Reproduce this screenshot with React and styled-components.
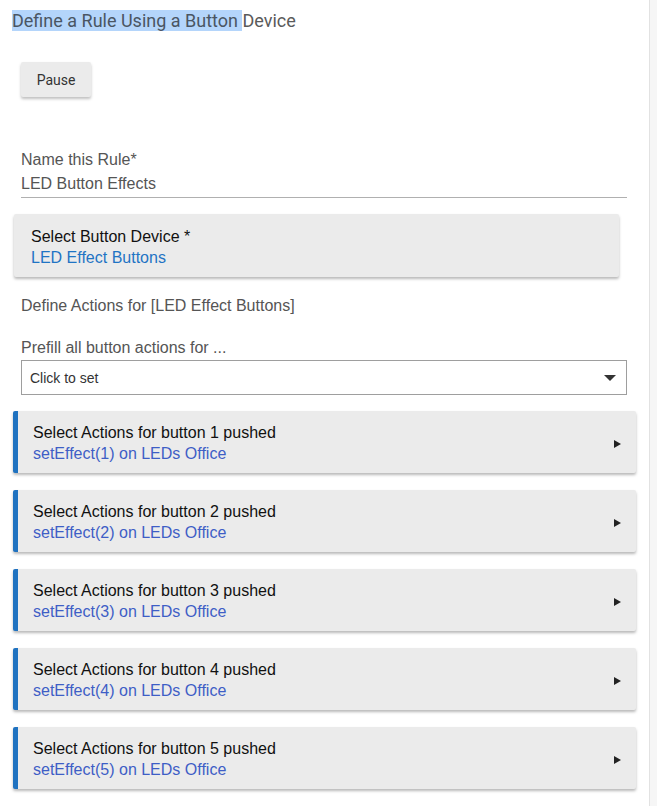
import styled, { createGlobalStyle } from "styled-components";

const GlobalStyle = createGlobalStyle`
  body {
    margin: 0;
    background: #f6f6f6;
    font-family: "Liberation Sans", Arial, sans-serif;
  }
`;

const Page = styled.div`
  width: 650px;
  min-height: 806px;
  background: #fff;
  border-right: 1px solid #e2e2e2;
  box-sizing: border-box;
  padding-top: 10px;
`;

const Title = styled.h2`
  margin: 0 0 0 12px;
  font-family: Roboto, sans-serif;
  font-weight: 400;
  font-size: 18px;
  line-height: 21px;
  color: #5a5a5a;
`;

const Selected = styled.span`
  background: #b4d5fb;
  color: #4a5563;
`;

const PauseButton = styled.button`
  display: block;
  margin: 31px 0 0 21px;
  width: 70px;
  height: 35px;
  border: none;
  border-radius: 2px;
  background: #ebebeb;
  box-shadow: 0 2px 3px rgba(0, 0, 0, 0.25);
  font-family: Roboto, sans-serif;
  font-size: 14px;
  color: #333;
`;

const Field = styled.div`
  margin: 52px 22px 0 21px;
  border-bottom: 1px solid #b0b0b0;
`;

const Label = styled.div`
  font-size: 16px;
  line-height: 22px;
  color: #555;
  margin-top: ${(p) => p.$top || 0}px;
  padding-left: ${(p) => p.$left || 0}px;
`;

const Value = styled.div`
  font-size: 16px;
  line-height: 26px;
  color: #555;
`;

const Card = styled.div`
  margin: ${(p) => p.$top}px 0 0 ${(p) => (p.$accent ? 13 : 14)}px;
  width: ${(p) => (p.$accent ? 623 : 605)}px;
  box-sizing: border-box;
  background: #ebebeb;
  border-radius: 2px;
  border-left: ${(p) => (p.$accent ? "5px solid #1f72c0" : "none")};
  box-shadow: 0 2px 3px rgba(0, 0, 0, 0.28);
  padding: ${(p) => (p.$accent ? "11px 15px 9px 15px" : "12px 17px 9px 17px")};
  display: flex;
  align-items: center;
  justify-content: space-between;
`;

const CardText = styled.div`
  display: flex;
  flex-direction: column;
  font-size: 16px;
  line-height: 21px;
`;

const CardTitle = styled.span`
  color: #111;
`;

const CardSub = styled.span`
  color: ${(p) => (p.$accent ? "#3e5ec6" : "#1f74c4")};
`;

const Arrow = styled.span`
  width: 0;
  height: 0;
  border-top: 4px solid transparent;
  border-bottom: 4px solid transparent;
  border-left: 7px solid #222;
  margin-top: 2px;
`;

const SelectBox = styled.div`
  margin: 1px 0 0 21px;
  width: 606px;
  height: 35px;
  box-sizing: border-box;
  border: 1px solid #9e9e9e;
  display: flex;
  align-items: center;
  justify-content: space-between;
  padding: 0 10px 0 8px;
  font-size: 14px;
  color: #333;
`;

const Caret = styled.span`
  width: 0;
  height: 0;
  border-left: 6px solid transparent;
  border-right: 6px solid transparent;
  border-top: 6px solid #333;
`;

const actions = [1, 2, 3, 4, 5];

export default function App() {
  return (
    <>
      <GlobalStyle />
      <Page>
        <Title>
          <Selected>Define a Rule Using a Button </Selected>Device
        </Title>
        <PauseButton>Pause</PauseButton>
        <Field>
          <Label>Name this Rule*</Label>
          <Value>LED Button Effects</Value>
        </Field>
        <Card $top={16}>
          <CardText>
            <CardTitle>Select Button Device *</CardTitle>
            <CardSub>LED Effect Buttons</CardSub>
          </CardText>
        </Card>
        <Label $top={18} $left={21}>Define Actions for [LED Effect Buttons]</Label>
        <Label $top={20} $left={21}>Prefill all button actions for ...</Label>
        <SelectBox>
          <span>Click to set</span>
          <Caret />
        </SelectBox>
        {actions.map((n, i) => (
          <Card key={n} $accent $top={i === 0 ? 16 : 17}>
            <CardText>
              <CardTitle>Select Actions for button {n} pushed</CardTitle>
              <CardSub $accent>setEffect({n}) on LEDs Office</CardSub>
            </CardText>
            <Arrow />
          </Card>
        ))}
      </Page>
    </>
  );
}
